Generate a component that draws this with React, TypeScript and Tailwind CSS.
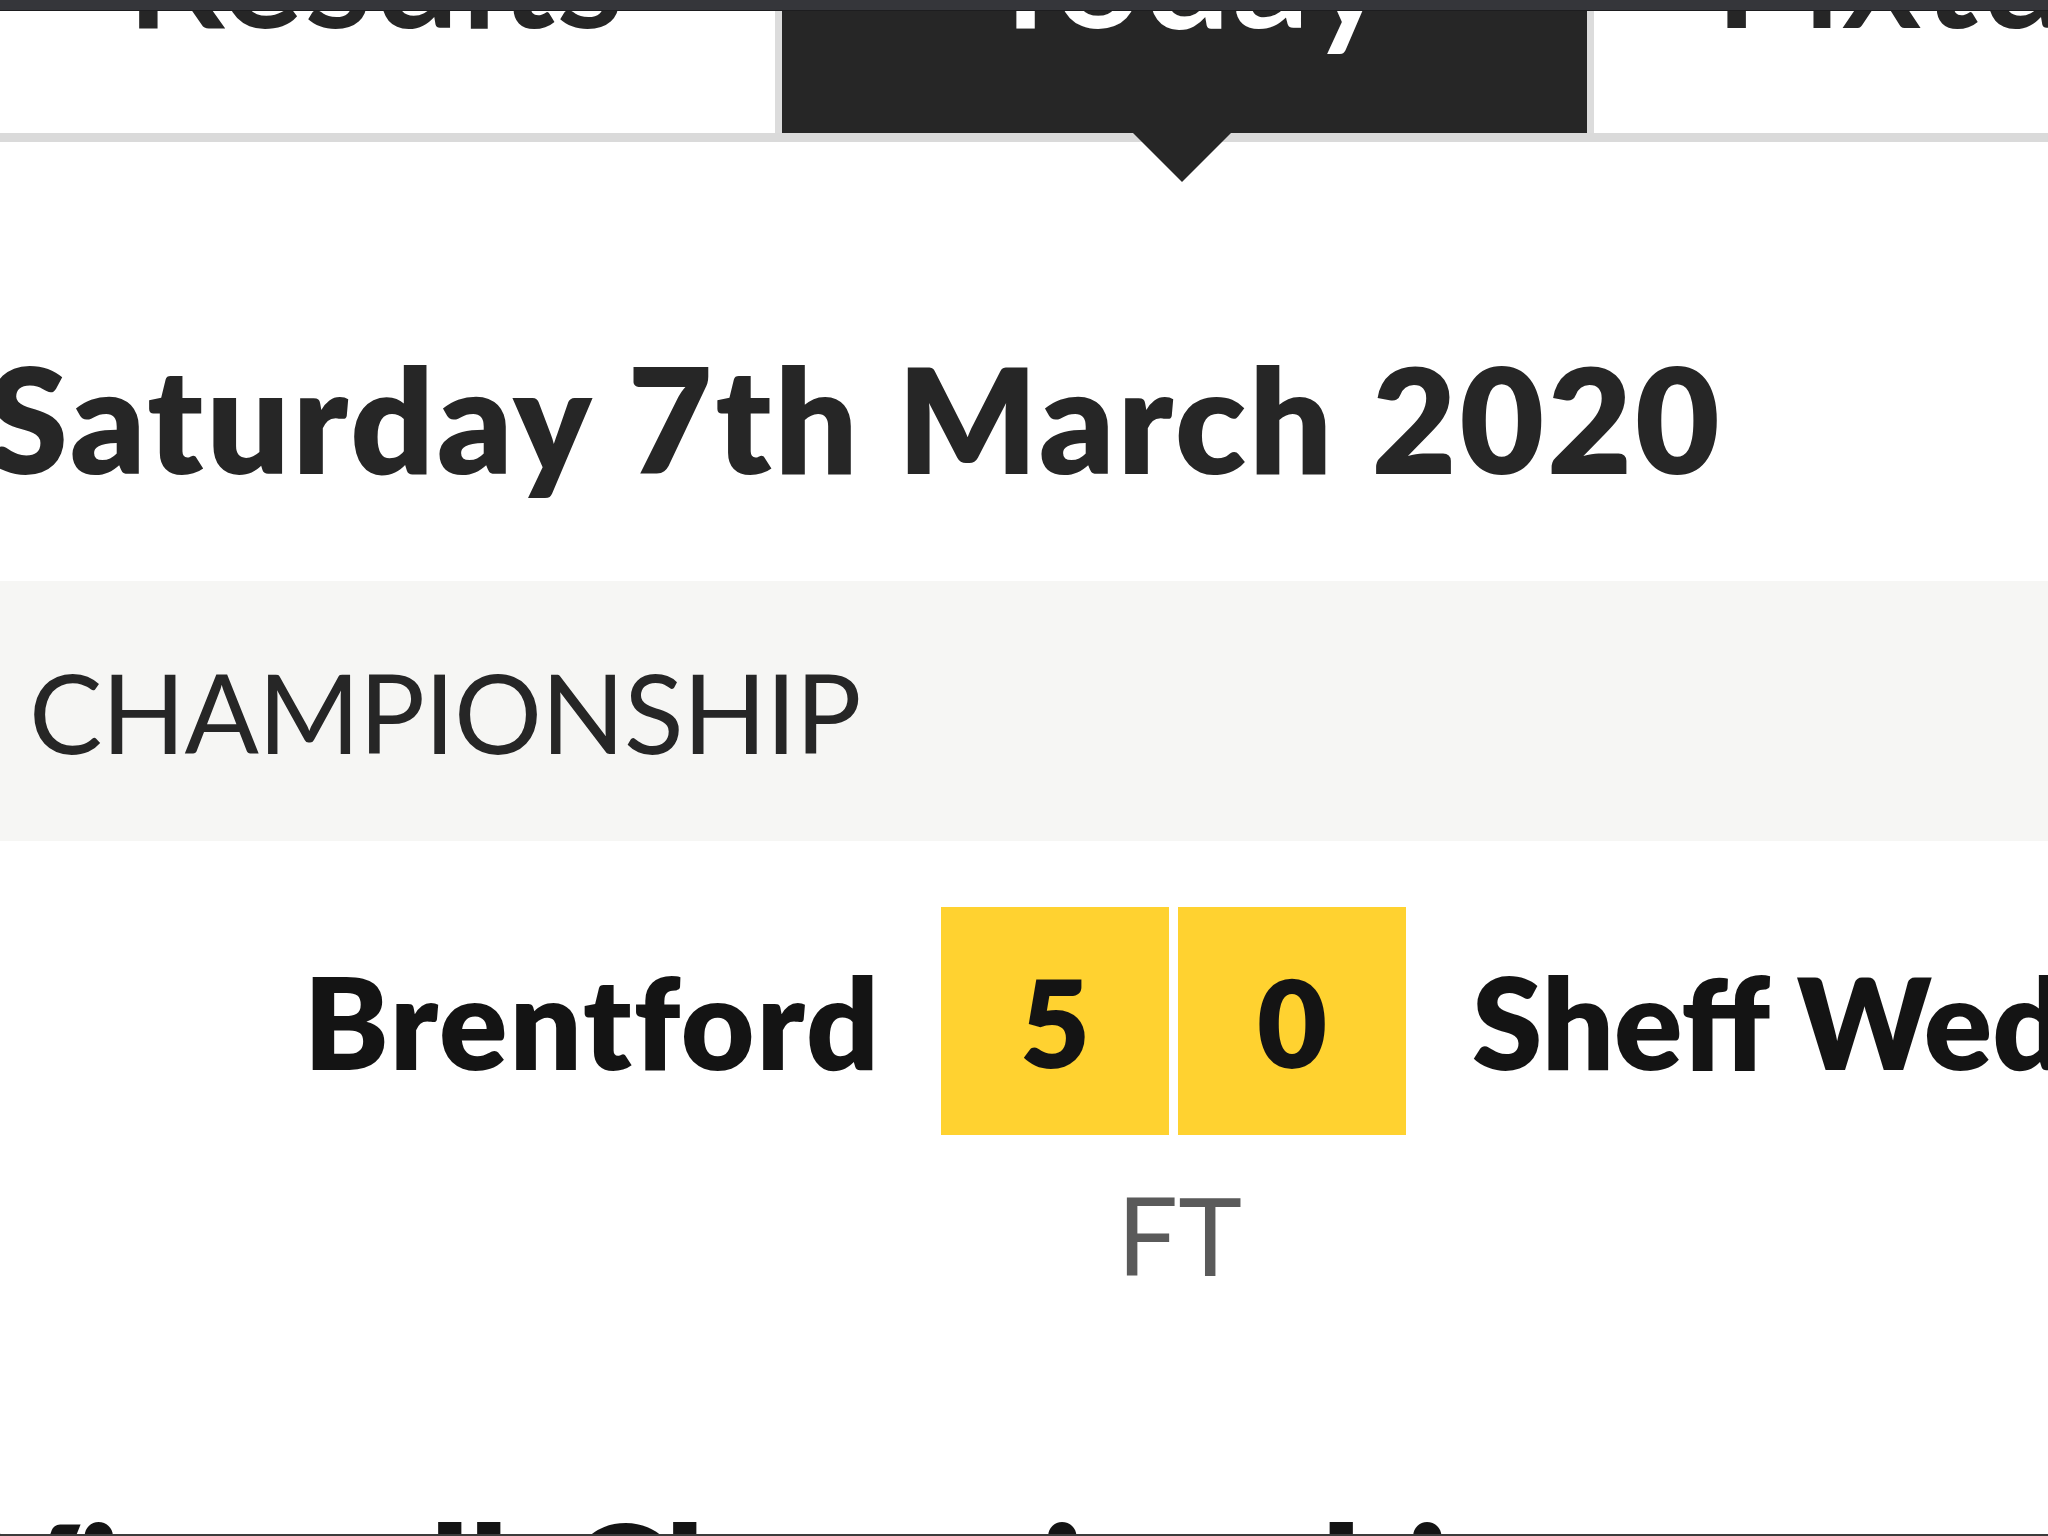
const FONT = { fontFamily: "Lato, 'Open Sans', sans-serif" };

function Tabs() {
  return (
    <div className="relative">
      <div className="flex h-[131px] overflow-hidden border-b-[9px] border-[#dadada]">
        <div className="w-[775px] shrink-0 pr-[25px] text-center">
          <span className="-mt-[122px] block text-[157px] font-semibold leading-none text-[#262626]">
            Results
          </span>
        </div>
        <div className="w-[819px] shrink-0 border-x-[7px] border-[#dcdcdc] bg-[#262626] text-center">
          <span className="-mt-[122px] block text-[157px] font-semibold leading-none text-white">
            Today
          </span>
        </div>
        <div className="flex-1 pl-[120px]">
          <span className="-mt-[122px] block whitespace-nowrap text-[157px] font-semibold leading-none text-[#262626]">
            Fixtures
          </span>
        </div>
      </div>
      {/* pointer under the active tab */}
      <svg
        className="absolute left-[1133px] top-[122px]"
        width="98"
        height="49"
        viewBox="0 0 98 49"
      >
        <polygon points="0,0 98,0 49,49" fill="#262626" />
      </svg>
    </div>
  );
}

function MatchRow() {
  return (
    <div className="flex items-center pt-[66px]">
      <div className="w-[881px] shrink-0 text-right text-[127px] font-extrabold leading-none tracking-[2px] text-[#141414]">
        Brentford
      </div>
      <div className="ml-[60px] flex shrink-0 gap-[9px]">
        <div className="flex h-[228px] w-[228px] items-center justify-center bg-[#ffd230] text-[121px] font-extrabold leading-none text-[#141414]">
          5
        </div>
        <div className="flex h-[228px] w-[228px] items-center justify-center bg-[#ffd230] text-[121px] font-extrabold leading-none text-[#141414]">
          0
        </div>
      </div>
      <div className="ml-[66px] whitespace-nowrap text-[127px] font-extrabold leading-none text-[#141414]">
        Sheff Wed
      </div>
    </div>
  );
}

export default function App() {
  return (
    <div className="relative h-[1536px] w-[2048px] overflow-hidden bg-white" style={FONT}>
      <div className="relative z-10 h-[11px] border-b border-[#1d1d1f] bg-[#35363a]" />
      <Tabs />

      <h1 className="-ml-[13px] mt-[203px] whitespace-nowrap text-[146px] font-extrabold leading-none tracking-[3px] text-[#262626]">
        Saturday 7th March 2020
      </h1>

      <div className="mt-[90px] flex h-[260px] items-center bg-[#f6f6f4] pl-[29px]">
        <span className="text-[110px] font-normal leading-none tracking-[-1px] text-[#262626]">
          CHAMPIONSHIP
        </span>
      </div>

      <MatchRow />

      <div className="mt-[45px] flex w-[2359px] justify-center">
        <span className="text-[108px] font-normal leading-none text-[#5a5a5a]">FT</span>
      </div>

      <p className="-ml-[28px] mt-[213px] whitespace-nowrap text-[150px] font-extrabold leading-none text-[#141414]">
        <span>View all</span> <span className="ml-[24px]">Championship scores</span>
      </p>

      <div className="absolute bottom-0 left-0 h-[2px] w-full bg-[#3c3c3c]" />
    </div>
  );
}
